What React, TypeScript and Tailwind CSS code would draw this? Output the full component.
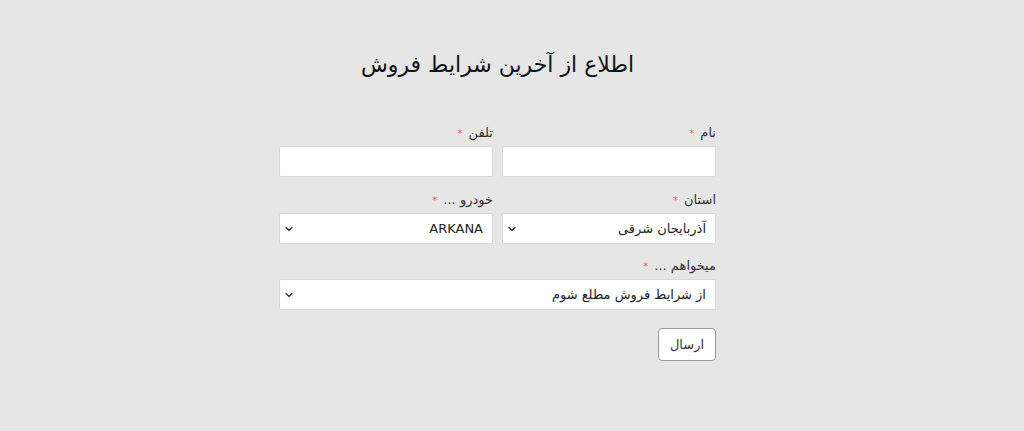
import { ChevronDown } from "lucide-react"

const font = { fontFamily: '"DejaVu Sans", "Noto Sans", sans-serif' }

function Label({ text }: { text: string }) {
  return (
    <div className="flex items-center gap-1.5 h-[18px] mb-[4px] text-[13px] text-[#333]">
      <span>{text}</span>
      <span className="text-[#e06a4f] text-[10px]">*</span>
    </div>
  )
}

function Select({ value }: { value: string }) {
  return (
    <div className="h-[31px] bg-white border border-[#d9d9d9] rounded-[2px] flex items-center justify-between pr-[9px] pl-[3px] text-[13px] text-[#222]">
      <span>{value}</span>
      <ChevronDown className="w-3 h-3 text-[#333]" strokeWidth={2.5} />
    </div>
  )
}

export default function App() {
  return (
    <div dir="rtl" style={font} className="min-h-[431px] bg-[#e6e6e6] flex flex-col items-center pr-[29px]">
      <h1 className="mt-[45px] text-[22px] text-[#111] leading-[40px]">اطلاع از آخرین شرایط فروش</h1>
      <form className="w-[437px] mt-[39px] flex flex-col">
        <div className="grid grid-cols-2 gap-x-[9px]">
          <div>
            <Label text="نام" />
            <div className="h-[31px] bg-white border border-[#d9d9d9] rounded-[2px]" />
          </div>
          <div>
            <Label text="تلفن" />
            <div className="h-[31px] bg-white border border-[#d9d9d9] rounded-[2px]" />
          </div>
        </div>
        <div className="grid grid-cols-2 gap-x-[9px] mt-[14px]">
          <div>
            <Label text="استان" />
            <Select value="آذربایجان شرقی" />
          </div>
          <div>
            <Label text="خودرو ..." />
            <Select value="ARKANA" />
          </div>
        </div>
        <div className="mt-[13px]">
          <Label text="میخواهم ..." />
          <Select value="از شرایط فروش مطلع شوم" />
        </div>
        <div className="mt-[18px] flex">
          <button type="button" className="w-[58px] h-[33px] bg-white border border-[#999] rounded-[4px] text-[13px] text-[#333]">
            ارسال
          </button>
        </div>
      </form>
    </div>
  )
}
